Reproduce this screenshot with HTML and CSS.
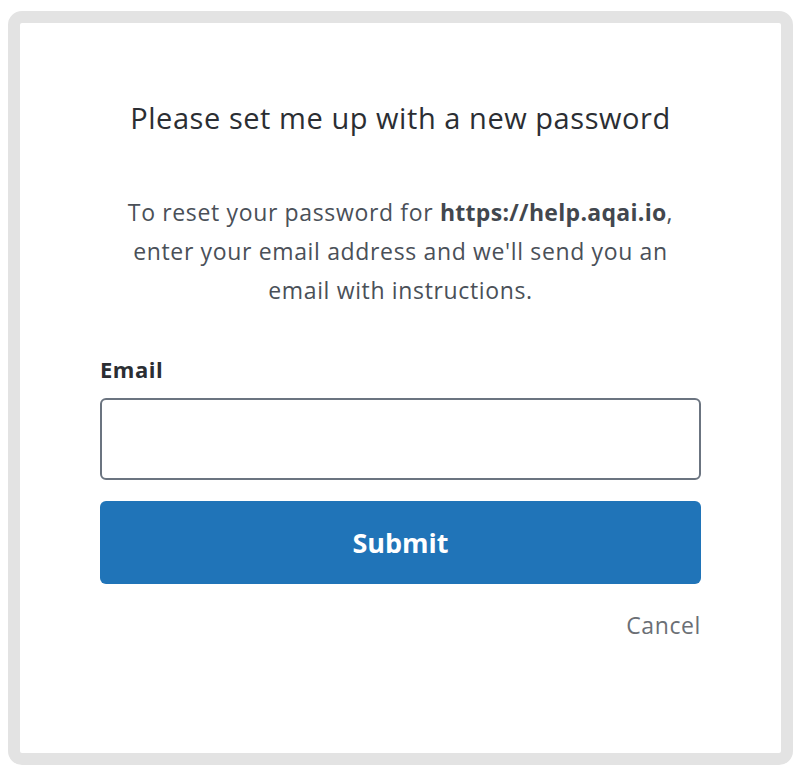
FILE: index.html
```html
<!DOCTYPE html>
<html lang="en">
<head>
<meta charset="utf-8">
<title>Reset password</title>
<link rel="stylesheet" href="styles.css">
</head>
<body>
<div class="frame">
  <main class="card">
    <h1 class="title">Please set me up with a new password</h1>
    <p class="intro">To reset your password for <strong>https://help.aqai.io</strong>, enter your email address and we'll send you an email with instructions.</p>
    <form class="form">
      <label class="label" for="email">Email</label>
      <input class="input" id="email" type="email">
      <button class="submit" type="button">Submit</button>
      <div class="actions"><a class="cancel" href="#">Cancel</a></div>
    </form>
  </main>
</div>
</body>
</html>
```
FILE: styles.css
```css
html, body {
  margin: 0;
  padding: 0;
  background: #ffffff;
}
body {
  padding: 11px 9px 9px 8px;
  font-family: "Open Sans", "Noto Sans", sans-serif;
  color: #2f3338;
}
.frame {
  box-sizing: border-box;
  height: 754px;
  border: 12px solid #e3e3e3;
  border-radius: 14px;
  background: #ffffff;
}
.card {
  display: flex;
  flex-direction: column;
  align-items: center;
  padding-top: 77px;
}
.title {
  margin: 0;
  font-size: 29px;
  letter-spacing: 0.55px;
  font-weight: 400;
  line-height: 36px;
  color: #2b2e33;
}
.intro {
  margin: 57px 0 0;
  width: 570px;
  text-align: center;
  font-size: 23px;
  letter-spacing: 0.65px;
  line-height: 39px;
  color: #4a5058;
}
.intro strong {
  font-weight: 700;
  letter-spacing: 0.3px;
  color: #42474e;
}
.form {
  margin-top: 44px;
  width: 601px;
  display: flex;
  flex-direction: column;
}
.label {
  font-size: 22px;
  letter-spacing: 0.5px;
  font-weight: 700;
  line-height: 30px;
  color: #2b2e33;
}
.input {
  box-sizing: border-box;
  margin-top: 14px;
  height: 82px;
  border: 2px solid #6b7480;
  border-radius: 6px;
  background: #fff;
  font: inherit;
}
.submit {
  margin-top: 21px;
  height: 83px;
  border: 0;
  border-radius: 6px;
  background: #2074b8;
  color: #ffffff;
  font-family: inherit;
  font-size: 27px;
  font-weight: 700;
}
.actions {
  display: flex;
  justify-content: flex-end;
  margin-top: 23px;
}
.cancel {
  font-size: 23px;
  letter-spacing: 0.6px;
  line-height: 36px;
  color: #6b6f75;
  text-decoration: none;
}
```
